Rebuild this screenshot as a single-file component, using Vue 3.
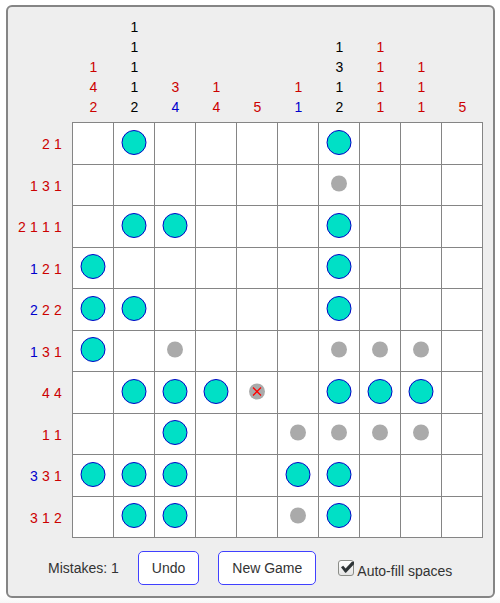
<script setup>
import { ref } from 'vue'

// Each clue is [number, state]; state is r (open), b (completed run) or k (line done).
const parse = (s) => s.split(' ').map((c) => ({ n: c[0], state: { r: 'open', b: 'run', k: 'done' }[c[1]] }))

const columnClues = [
  '1r 4r 2r', '1k 1k 1k 1k 2k', '3r 4b', '1r 4r', '5r',
  '1r 1b', '1k 3k 1k 2k', '1r 1r 1r 1r', '1r 1r 1r', '5r',
].map(parse)

const rowClues = [
  '2r 1r', '1r 3r 1r', '2r 1r 1r 1r', '1b 2r 1r', '2b 2r 2r',
  '1b 3r 1r', '4r 4r', '1r 1r', '3b 3r 1r', '3r 1r 2r',
].map(parse)

// # filled, o marked as space, x mistake, . empty
const board = ref([
  '.#....#...',
  '......o...',
  '.##...#...',
  '#.....#...',
  '##....#...',
  '#.o...ooo.',
  '.###x.###.',
  '..#..oooo.',
  '###..##...',
  '.##..o#...',
].map((r) => r.split('')))

const mistakes = ref(1)
const autoFill = ref(true)
const history = []

function mark(r, c) {
  if (board.value[r][c] === 'x') return
  history.push([r, c, board.value[r][c]])
  board.value[r][c] = { '.': '#', '#': 'o', o: '.' }[board.value[r][c]]
}

function undo() {
  const last = history.pop()
  if (last) board.value[last[0]][last[1]] = last[2]
}

function newGame() {
  history.length = 0
  mistakes.value = 0
  board.value = board.value.map((row) => row.map(() => '.'))
}
</script>

<template>
  <main class="panel">
    <table class="grid">
      <thead>
        <tr>
          <td class="corner"></td>
          <th v-for="(clues, c) in columnClues" :key="c" scope="col" class="col-clue">
            <span v-for="(clue, i) in clues" :key="i" :class="clue.state">{{ clue.n }}</span>
          </th>
        </tr>
      </thead>
      <tbody>
        <tr v-for="(row, r) in board" :key="r">
          <th scope="row" class="row-clue">
            <div class="run-list">
              <span v-for="(clue, i) in rowClues[r]" :key="i" :class="clue.state">{{ clue.n }}</span>
            </div>
          </th>
          <td v-for="(cell, c) in row" :key="c" class="square">
            <button type="button" class="cell" :aria-label="`Row ${r + 1}, column ${c + 1}`" @click="mark(r, c)">
              <svg v-if="cell !== '.'" width="26" height="25" viewBox="0 0 26 25" aria-hidden="true">
                <circle v-if="cell === '#'" cx="13" cy="12.5" r="12" fill="#00e0c6" stroke="#0000c8" />
                <circle v-else cx="13" cy="12.5" r="8" fill="#aaa" />
                <path v-if="cell === 'x'" d="M9 8.5l8 8M17 8.5l-8 8" stroke="#f00" stroke-width="1.3" />
              </svg>
            </button>
          </td>
        </tr>
      </tbody>
    </table>

    <div class="controls">
      <span class="mistakes">Mistakes: {{ mistakes }}</span>
      <button type="button" class="btn" @click="undo">Undo</button>
      <button type="button" class="btn" @click="newGame">New Game</button>
      <label class="option" for="auto-fill">
        <span class="check">
          <input id="auto-fill" v-model="autoFill" type="checkbox" />
          <svg v-if="autoFill" class="tick" width="16" height="16" viewBox="0 0 16 16" aria-hidden="true">
            <path d="M3 7.2L5.2 5.8 7.6 8.4 13.6 2 16 1.6V4.2L8 12.8H7.2Z" fill="#2e3436" />
          </svg>
        </span>
        <span class="option-text">Auto-fill spaces</span>
      </label>
    </div>
  </main>
</template>

<style>
body {
  margin: 0;
  background: #fff;
}

#app {
  display: flow-root;
  background: linear-gradient(to top, #f7f7f7, #fff 8px);
}
</style>

<style scoped>
.panel {
  margin: 5px 5px 5px 6px;
  padding: 10px 10px 11px 0;
  border: 2px solid #858585;
  border-radius: 6px;
  background: #eee;
  color: #333;
  font: 14px/20px "Liberation Sans", Arial, sans-serif;
}

.grid {
  width: 100%;
  table-layout: fixed;
  border-collapse: separate;
  border-spacing: 0;
}

.grid th {
  font-weight: normal;
}

/* The last pixel joins the top and left grid lines. */
.corner {
  width: 65px;
  padding: 0;
  box-sizing: border-box;
  background: linear-gradient(#858585, #858585) right bottom / 1px 1px no-repeat;
}

.col-clue {
  padding: 0 0 5px;
  border-bottom: 1px solid #858585;
  vertical-align: bottom;
}

.col-clue span {
  display: block;
}

.row-clue {
  box-sizing: border-box;
  padding: 0 10px 0 0;
  border-right: 1px solid #858585;
}

.run-list {
  display: flex;
  justify-content: flex-end;
  gap: 4px;
}

.run-list span {
  width: 8px;
}

.open {
  color: #c00;
}

.run {
  color: #00c;
}

.done {
  color: #000;
}

.square {
  height: 41px;
  padding: 0;
  box-sizing: border-box;
  border-right: 1px solid #858585;
  border-bottom: 1px solid #858585;
  background: #fff;
}

tr:nth-child(odd) .square {
  height: 42px;
}

.cell {
  display: flex;
  align-items: center;
  justify-content: center;
  width: 100%;
  height: 40px;
  padding: 0 0 3px;
  border: 0;
  background: none;
}

.controls {
  display: flex;
  align-items: center;
  padding: 13px 0 0 40px;
}

.btn {
  height: 34px;
  margin-left: 19px;
  padding: 0 13px;
  border: 1px solid #4040ff;
  border-radius: 5px;
  background: #fff;
  color: #333;
  font: inherit;
}

.option {
  display: flex;
  align-items: center;
  margin-left: 22px;
  gap: 3px;
}

.option-text {
  padding-top: 6px;
}

.check {
  position: relative;
  display: flex;
}

.check input {
  appearance: none;
  width: 16px;
  height: 16px;
  margin: 0;
  border: 1px solid #8b8d88;
  border-radius: 3px;
  background: linear-gradient(#fff, #e4e4e4);
}

.tick {
  position: absolute;
  top: 0;
  left: 0;
  pointer-events: none;
}
</style>
